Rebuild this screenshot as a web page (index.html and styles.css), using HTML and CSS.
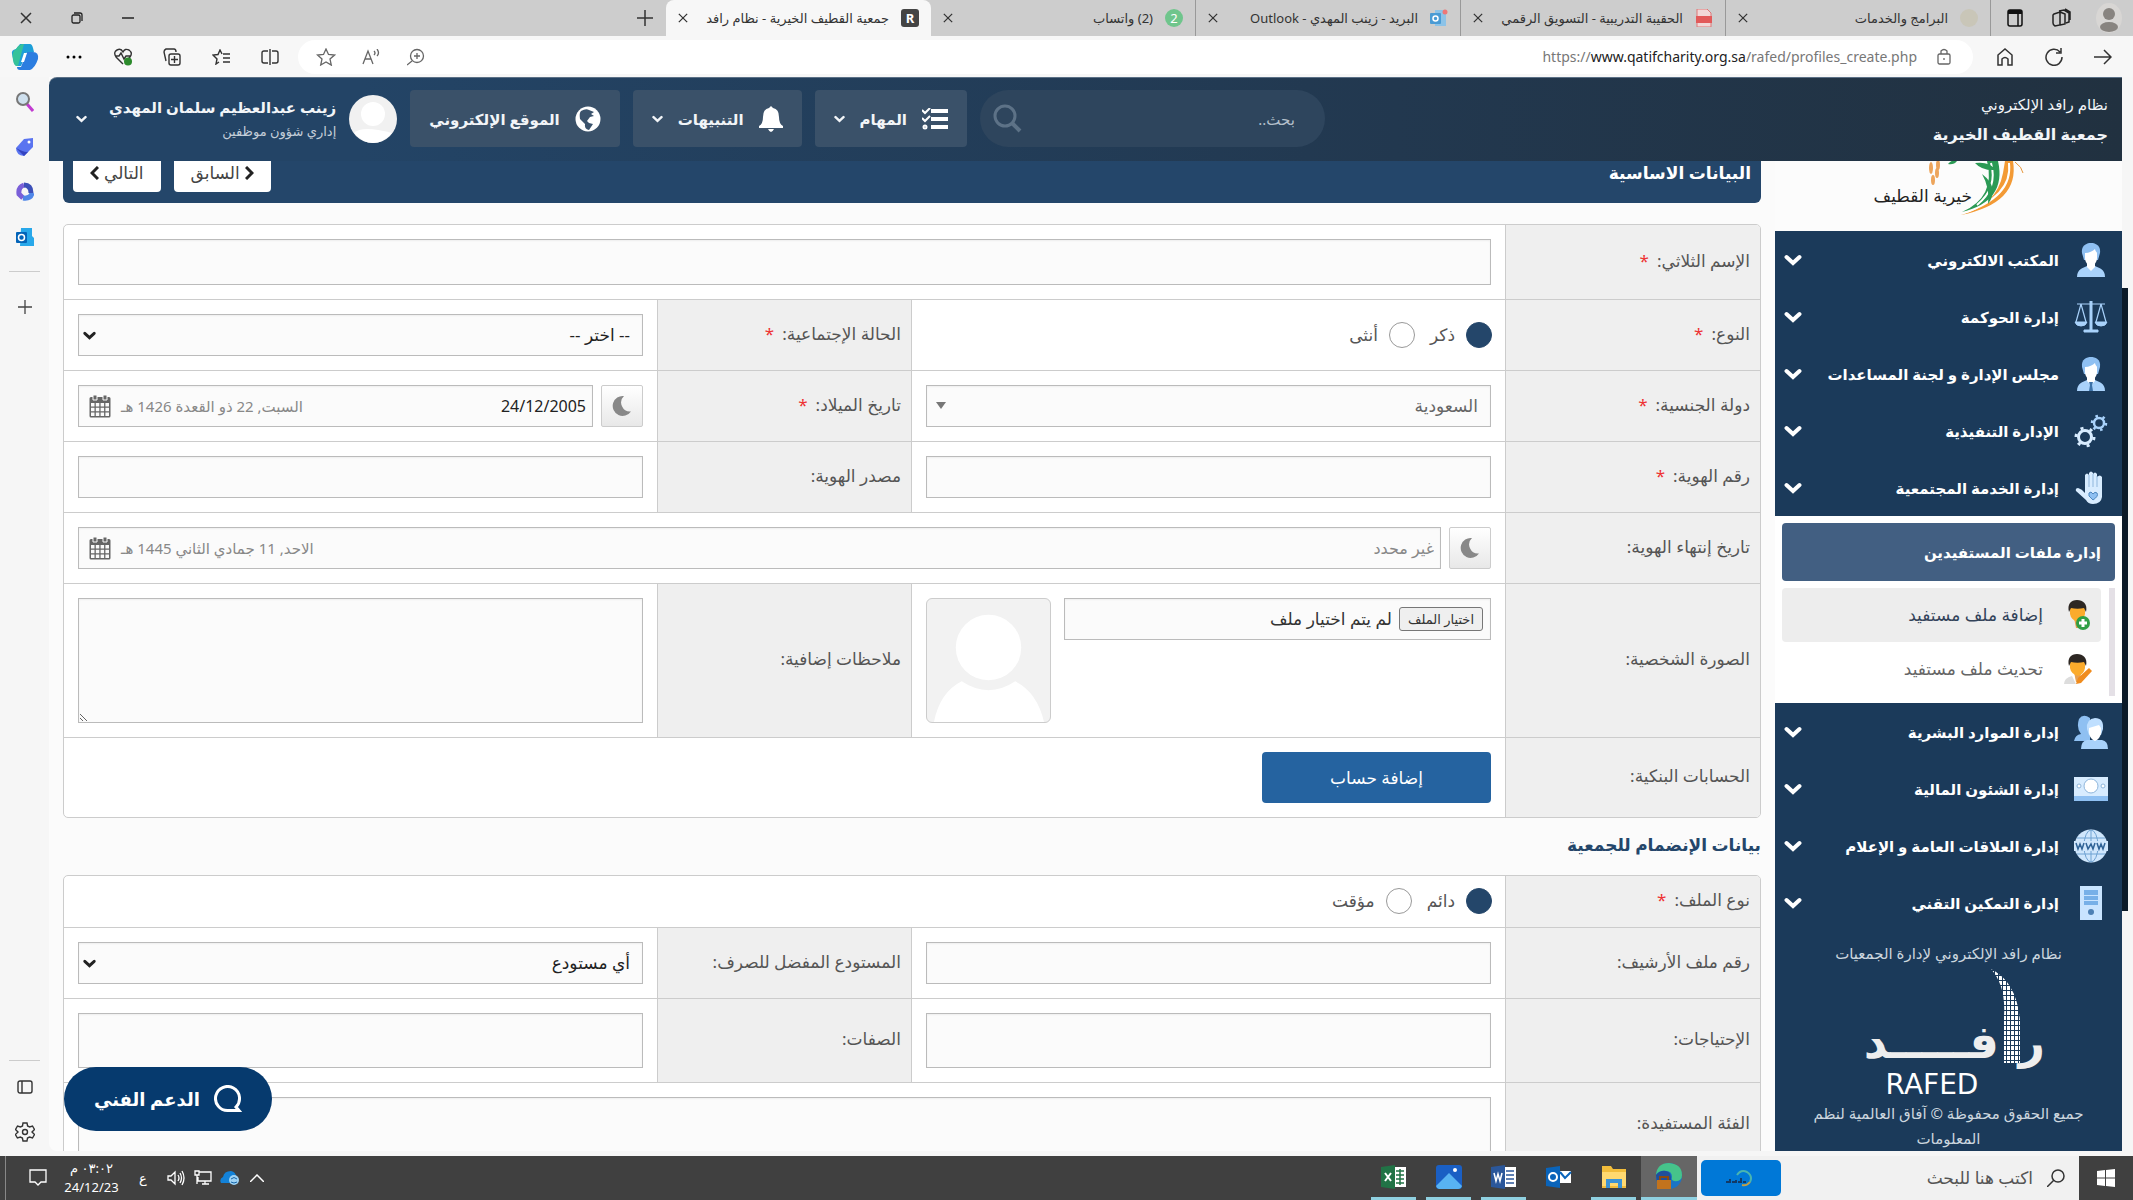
FILE: index.html
```html
<!DOCTYPE html>
<html lang="ar" dir="rtl">
<head>
    <meta charset="UTF-8">
    <meta name="viewport" content="width=device-width, initial-scale=1.0">
    <title>جمعية القطيف الخيرية - نظام رافد</title>
    <link rel="stylesheet" href="styles.css">
</head>
<body>
    <!-- Iconos compartidos -->
    <svg class="sprite" aria-hidden="true">
        <symbol id="close" viewBox="0 0 12 12"><path d="M1 1l10 10M11 1L1 11" fill="none" stroke="currentColor" stroke-width="1.5"/></symbol>
        <symbol id="chevron" viewBox="0 0 18 12"><path d="M2.5 3l6.5 6 6.5-6" fill="none" stroke="currentColor" stroke-width="4" stroke-linecap="round"/></symbol>
        <symbol id="moon" viewBox="0 0 20 22"><path d="M12 1A10 10 0 1 0 19 16.500A9 9 0 0 1 12 1z" fill="currentColor"/></symbol>
        <symbol id="calendar" viewBox="0 0 22 24">
            <path d="M2 3h18a1.500 1.500 0 0 1 1.500 1.500V22a1.500 1.500 0 0 1-1.500 1.500H2A1.500 1.500 0 0 1 .5 22V4.500A1.500 1.500 0 0 1 2 3z" fill="currentColor"/>
            <path d="M4 1h4v5H4zM14 1h4v5h-4z" fill="currentColor" stroke="#fafafa"/>
            <path d="M2 9h3.500v3.500H2zM6.800 9h3.500v3.500H6.800zM11.600 9h3.500v3.500h-3.500zM16.400 9H20v3.500h-3.600zM2 13.700h3.500v3.500H2zM6.800 13.700h3.500v3.500H6.800zM11.600 13.700h3.500v3.500h-3.500zM16.400 13.700H20v3.500h-3.600zM2 18.400h3.500V22H2zM6.800 18.400h3.500V22H6.800zM11.600 18.400h3.500V22h-3.500zM16.400 18.400H20V22h-3.600z" fill="#fafafa"/>
        </symbol>
        <symbol id="person" viewBox="0 0 34 34">
            <path d="M3 34c0-8 6-9 10-11h8c4 2 10 3 10 11z" fill="#a9d2fb"/>
            <path d="M13 20h8v4l-4 4-4-4z" fill="#fff"/>
            <path d="M8 10C7 2 13 0 17 0s10 2 9 10l-2 7H10z" fill="#8fc0f2"/>
            <path d="M11 10c4 0 8-2 10-4 0 2 2 3 2 4v5c0 4-3 8-6 8s-6-4-6-8z" fill="#fff"/>
        </symbol>
        <symbol id="face" viewBox="0 0 30 32">
            <path d="M11 19h7l-1 10h-4z" fill="#e8a050"/>
            <path d="M7 8h15v7q-1 6-7 8-7-2-8-8z" fill="#fbab2c"/>
            <path d="M6 13C4 5 8 1 14 1s11 4 9 12l-2-4c-4 1-9 1-13 0z" fill="#2d2723"/>
        </symbol>
    </svg>

    <div class="window">
        <header class="tabbar">
            <div class="tab-tools">
                <button aria-label="الملف الشخصي"><svg width="26" height="32" viewBox="0 0 26 32"><ellipse cx="13" cy="16" rx="13" ry="15" fill="#d8d6d4"/><circle cx="13" cy="12" r="6" fill="#888480"/><ellipse cx="13" cy="25" rx="9" ry="5" fill="#888480"/></svg></button>
                <button aria-label="مساحات العمل"><svg width="20" height="20" viewBox="0 0 20 20" fill="none" stroke="#222" stroke-width="1.500"><path d="M2 6l6-2v13l-5 1q-2-1-2-3V7zM8 4l5 2v10l-5 1M7 3l5-1 5 3v9l-3 1M13 1l5 3v8"/></svg></button>
                <button aria-label="علامات التبويب"><svg width="16" height="18" viewBox="0 0 16 18" fill="none" stroke="#111" stroke-width="1.500"><rect x="1" y="1" width="14" height="16" rx="2"/><path d="M1 3h14" stroke-width="4"/><path d="M11 4v13"/></svg></button>
            </div>
            <div class="tab">
                <span class="favicon fav-programs"></span><span class="tab-title">البرامج والخدمات</span>
                <button class="tab-close" aria-label="إغلاق"><svg width="10" height="10"><use href="#close"/></svg></button>
            </div>
            <div class="tab">
                <svg class="favicon" viewBox="0 0 16 18"><path d="M1 0h10l4 4v14H1z" fill="#f2d8d8" stroke="#d77"/><path d="M0 7h16v7H0z" fill="#e25a5a"/></svg><span class="tab-title">الحقيبة التدريبية - التسويق الرقمي</span>
                <button class="tab-close" aria-label="إغلاق"><svg width="10" height="10"><use href="#close"/></svg></button>
            </div>
            <div class="tab">
                <svg class="favicon" viewBox="0 0 18 18"><path d="M5 1h11v16H5z" fill="#8cc3e8"/><rect y="4" width="11" height="11" rx="1" fill="#4a9bd4"/><circle cx="5.500" cy="9.500" r="2.500" fill="none" stroke="#fff" stroke-width="1.500"/><circle cx="15" cy="3" r="2.500" fill="#e77"/></svg><span class="tab-title">البريد - زينب المهدي - Outlook</span>
                <button class="tab-close" aria-label="إغلاق"><svg width="10" height="10"><use href="#close"/></svg></button>
            </div>
            <div class="tab">
                <span class="favicon fav-whats">2</span><span class="tab-title">(2) واتساب</span>
                <button class="tab-close" aria-label="إغلاق"><svg width="10" height="10"><use href="#close"/></svg></button>
            </div>
            <div class="tab tab-active">
                <span class="favicon fav-rafed">R</span><span class="tab-title">جمعية القطيف الخيرية - نظام رافد</span>
                <button class="tab-close" aria-label="إغلاق"><svg width="10" height="10"><use href="#close"/></svg></button>
            </div>
            <button class="new-tab" aria-label="علامة تبويب جديدة"><svg width="16" height="16" viewBox="0 0 16 16"><path d="M8 0v16M0 8h16" stroke="#333" stroke-width="1.500"/></svg></button>
            <div class="win-controls">
                <button aria-label="تصغير"><svg width="12" height="12"><path d="M0 6h12" stroke="#222" stroke-width="1.500"/></svg></button>
                <button aria-label="استعادة"><svg width="12" height="12" viewBox="0 0 12 12" fill="none" stroke="#222" stroke-width="1.300"><rect x="1" y="3" width="8" height="8" rx="1.500"/><path d="M3 1h6q2 0 2 2v6"/></svg></button>
                <button aria-label="إغلاق"><svg width="12" height="12"><use href="#close"/></svg></button>
            </div>
        </header>

        <div class="toolbar">
            <button class="tool" aria-label="رجوع"><svg width="18" height="16" viewBox="0 0 18 16" fill="none" stroke="#333" stroke-width="1.500"><path d="M0 8h17M10 1l7 7-7 7"/></svg></button>
            <button class="tool" aria-label="تحديث"><svg width="18" height="18" viewBox="0 0 18 18" fill="none" stroke="#333" stroke-width="1.500"><path d="M15 4a8 8 0 1 0 2 5M16 0v5h-5"/></svg></button>
            <button class="tool" aria-label="الصفحة الرئيسية"><svg width="16" height="18" viewBox="0 0 16 18" fill="none" stroke="#333" stroke-width="1.500"><path d="M1 7l7-6 7 6v10h-4v-6q-3-3-6 0v6H1z"/></svg></button>
            <div class="address">
                <svg class="lock" width="14" height="18" viewBox="0 0 14 18" fill="none" stroke="#666" stroke-width="1.300"><rect x="1" y="6" width="12" height="10" rx="1.500"/><path d="M4 6V3q3-3 6 0v3M7 10v2"/></svg>
                <a class="url" href="#" dir="ltr">https://<b>www.qatifcharity.org.sa</b>/rafed/profiles_create.php</a>
                <button aria-label="تكبير"><svg width="18" height="18" viewBox="0 0 18 18" fill="none" stroke="#666" stroke-width="1.300"><circle cx="10" cy="8" r="6.500"/><path d="M5 13l-5 4M10 5v6M7 8h6"/></svg></button>
                <button aria-label="قراءة بصوت عال"><svg width="18" height="16" viewBox="0 0 18 16" fill="none" stroke="#666" stroke-width="1.300"><path d="M1 15L6 2l5 13M3 10h6M12 2q2 2 0 4M15 0q3 4 0 7"/></svg></button>
                <button aria-label="إضافة إلى المفضلة"><svg width="20" height="18" viewBox="0 0 20 18" fill="none" stroke="#666" stroke-width="1.300"><path d="M10 1l2.500 5.500 6 .6-4.500 4 1.300 6L10 14l-5.300 3 1.300-6-4.500-4 6-.6z"/></svg></button>
            </div>
            <button class="tool" aria-label="تقسيم الشاشة"><svg width="18" height="16" viewBox="0 0 18 16" fill="none" stroke="#333" stroke-width="1.400"><path d="M7 2H3Q1 2 1 4v8q0 2 2 2h4M11 2h4q2 0 2 2v8q0 2-2 2h-4M9 0v16"/></svg></button>
            <button class="tool" aria-label="المفضلة"><svg width="18" height="16" viewBox="0 0 18 16" fill="none" stroke="#333" stroke-width="1.400"><path d="M10 5L8 1 6 5.500l-5 .5 4 4-1 5 3-2M11 5h7M11 9h7M11 13h7"/></svg></button>
            <button class="tool" aria-label="المجموعات"><svg width="18" height="18" viewBox="0 0 18 18" fill="none" stroke="#333" stroke-width="1.400"><rect x="6" y="6" width="11" height="11" rx="2"/><path d="M11.500 8v7M8 11.500h7M3 13L1 4q0-2 2-3l8 0q2 0 2 3"/></svg></button>
            <button class="tool" aria-label="أساسيات المتصفح"><svg width="20" height="18" viewBox="0 0 20 18" fill="none" stroke="#333" stroke-width="1.400"><path d="M10 16L3 9Q0 4 4 2q4-2 6 2 2-4 6-2 4 3 1 7l-2 2M2 8h4l2-3 3 6 2-3h4"/><circle cx="15" cy="13.500" r="4" fill="#2c8a2c" stroke="none"/></svg></button>
            <button class="tool" aria-label="المزيد"><svg width="16" height="4"><circle cx="2" cy="2" r="1.500"/><circle cx="8" cy="2" r="1.500"/><circle cx="14" cy="2" r="1.500"/></svg></button>
            <button class="tool" aria-label="مساعد"><svg width="28" height="26" viewBox="0 0 28 26"><path d="M9 0h10q2 0 3 4l1 4h-7L10 22H6q-2 0-3-3L1 10Q0 6 5 5z" fill="#1d9fd8"/><path d="M5 5q3-5 8-5l-6 22H6q-3 0-4-6Q0 8 5 5z" fill="#35c29a"/><path d="M19 26H9q-3 0-3-3h4l6-15h6q6 0 5 7-3 9-8 11z" fill="#2b7de0"/><path d="M13 9h3l-3 9h-3z" fill="#fff"/></svg></button>
        </div>

        <div class="middle">
            <div class="page-scroll"><div class="thumb"></div></div>

            <div class="app">
                <div class="app-header">
                    <div class="brand">
                        <span>نظام رافد الإلكتروني</span>
                        <strong>جمعية القطيف الخيرية</strong>
                    </div>
                    <div class="search">
                        <input type="text" placeholder="بحث.." aria-label="بحث">
                        <svg width="29" height="29" viewBox="0 0 29 29" fill="none" stroke="#5d7287" stroke-width="3"><circle cx="12" cy="12" r="10"/><path d="M19 19l8 8" stroke-width="4"/></svg>
                    </div>
                    <button class="head-btn">
                        <svg width="26" height="22" viewBox="0 0 26 22" fill="none" stroke="#fff" stroke-width="4"><path d="M9 3h17M9 11h17M9 19h17"/><path d="M0 2l3 3 5-5M0 10l3 3 5-5" stroke-width="2"/><circle cx="3" cy="19" r="1" stroke-width="3"/></svg>
                        المهام
                        <svg class="caret" width="11" height="8"><use href="#chevron"/></svg>
                    </button>
                    <button class="head-btn">
                        <svg width="24" height="26" viewBox="0 0 24 26" fill="#fff"><path d="M12 0l2 2q6 1 6 9 0 7 4 9v2H0v-2q4-2 4-9 0-8 6-9zM9 23h6q-3 6-6 0z"/></svg>
                        التنبيهات
                        <svg class="caret" width="11" height="8"><use href="#chevron"/></svg>
                    </button>
                    <button class="head-btn">
                        <svg width="26" height="26" viewBox="0 0 26 26"><circle cx="13" cy="13" r="12.500" fill="#fff"/><path d="M6 5q5-3 8-1l5 2-3 2 3 2-4 1-3 4 2 2 4 1-4 6q-5-1-4-6l-5-5q-1-6 1-8z" fill="#3b536c"/></svg>
                        الموقع الإلكتروني
                    </button>
                    <svg class="avatar" width="48" height="48" viewBox="0 0 48 48"><circle cx="24" cy="24" r="24" fill="#f1f1f1"/><circle cx="24" cy="19" r="12" fill="#fff"/><path d="M5 38q8-8 38 0-9 10-19 10T5 38z" fill="#fff"/></svg>
                    <div class="user">
                        <strong>زينب عبدالعظيم سلمان المهدي</strong>
                        <span>إداري شؤون موظفين</span>
                    </div>
                    <svg class="caret" width="11" height="8"><use href="#chevron"/></svg>
                </div>

                <div class="app-body">
                    <aside class="sidebar">
                        <div class="org-logo">
                            <svg width="347" height="70" viewBox="0 0 347 70" fill="none">
                                <path d="M238 0Q245 42 186 54Q222 44 228 12L230 0z" fill="#f39a35"/>
                                <path d="M234 2q4 34-46 50" stroke="#fff" stroke-width="2"/>
                                <path d="M240 1q7 5 8 11" stroke="#e8973a"/>
                                <path d="M212 0h11Q232 40 187 51Q221 36 212 0z" fill="#2b9a55"/>
                                <path d="M216 2q7 25-14 42" stroke="#fff" stroke-width="2"/>
                                <path d="M207 13q18 14 6 30 2-16-6-30z" fill="#2b9a55"/>
                                <path d="M200 2q14-2 21 7-14 1-21-7zM173 3q4-5 9-3-3 4-9 3z" fill="#2b9a55"/>
                                <g fill="#eda55c"><ellipse cx="156" cy="7" rx="2" ry="6"/><ellipse cx="163" cy="4" rx="2" ry="5"/><ellipse cx="162" cy="12" rx="2" ry="5"/><ellipse cx="158" cy="19" rx="2" ry="5"/></g>
                                <text x="197" y="41" class="org-name">خيرية القطيف</text>
                            </svg>
                        </div>
                        <nav class="menu">
                            <a href="#"><svg class="menu-icon"><use href="#person"/></svg><span>المكتب الالكتروني</span><svg class="arrow"><use href="#chevron"/></svg></a>
                            <a href="#"><svg class="menu-icon" viewBox="0 0 34 34" fill="none" stroke="#a9d2fb"><path d="M17 1v30" stroke-width="3"/><path d="M3 4h28M7 4L2 22M7 4l5 18M27 4l-5 18M27 4l5 18" stroke-width="1.200"/><path d="M1 22h12q-1 4-6 4t-6-4zM21 22h12q-1 4-6 4t-6-4zM10 30h14v2H10z" fill="#a9d2fb"/></svg><span>إدارة الحوكمة</span><svg class="arrow"><use href="#chevron"/></svg></a>
                            <a href="#"><svg class="menu-icon" viewBox="0 0 34 34"><use href="#person"/><path d="M15 25h4l-1 3 1 6h-4l1-6z" fill="#3d72a8"/></svg><span>مجلس الإدارة و لجنة المساعدات</span><svg class="arrow"><use href="#chevron"/></svg></a>
                            <a href="#"><svg class="menu-icon" viewBox="0 0 34 34" fill="none" stroke="#a9d2fb"><circle cx="11" cy="23" r="6.500" stroke="#d8ecff" stroke-width="3"/><circle cx="11" cy="23" r="9" stroke="#d8ecff" stroke-width="3" stroke-dasharray="3 6.400"/><circle cx="25" cy="9" r="5" stroke-width="2.500"/><circle cx="25" cy="9" r="7" stroke-width="2.500" stroke-dasharray="2.500 4.800"/></svg><span>الإدارة التنفيذية</span><svg class="arrow"><use href="#chevron"/></svg></a>
                            <a href="#"><svg class="menu-icon" viewBox="0 0 34 34"><path d="M11 4q2-3 4 0V2q2-3 4 0v1q2-3 4 0v3q3-3 5 0v20q-1 7-9 7-5 0-7-4L2 20q-1-3 2-3 4 1 7 5z" fill="#d8ecff"/><path d="M15 4v12M19 3v13M23 5v11" stroke="#8fb6dc"/><path d="M19 29l-4-4q-1-4 2-4l2 2q2-3 4-1 2 3-4 7z" fill="#8fc0f2" stroke="#4d88c0"/></svg><span>إدارة الخدمة المجتمعية</span><svg class="arrow"><use href="#chevron"/></svg></a>
                        </nav>
                        <div class="submenu">
                            <h3>إدارة ملفات المستفيدين</h3>
                            <div class="sub-list">
                                <a href="#" class="sub-active"><svg width="30" height="32" viewBox="0 0 30 32"><use href="#face"/><circle cx="20" cy="24" r="7" fill="#2f9e44"/><path d="M20 20v8M16 24h8" stroke="#fff" stroke-width="3"/></svg>إضافة ملف مستفيد</a>
                                <a href="#"><svg width="30" height="32" viewBox="0 0 30 32"><path d="M1 31q0-6 8-8l4 8z" fill="#ddd"/><use href="#face"/><path d="M13 31l2-6L26 15l3 3-11 12z" fill="#f08c1e"/></svg>تحديث ملف مستفيد</a>
                            </div>
                        </div>
                        <nav class="menu">
                            <a href="#"><svg class="menu-icon" viewBox="0 0 34 34"><path d="M0 26q1-6 7-7-5-6-2-15Q9-2 16 3v23z" fill="#8fc0f2"/><path d="M7 34q0-8 6-9h15q6 1 6 9z" fill="#a9d2fb"/><path d="M13 14q-1-10 8-11 9 0 8 11l-2 6H15z" fill="#bfdfff"/><path d="M15 13l10-3 2 3v5q-1 6-6 8-5-2-6-8z" fill="#fff"/></svg><span>إدارة الموارد البشرية</span><svg class="arrow"><use href="#chevron"/></svg></a>
                            <a href="#"><svg class="menu-icon" viewBox="0 0 34 34"><path d="M0 5h34v24H0z" fill="#8fc0f2"/><path d="M0 5h34v19H0z" fill="#d8ecff"/><g fill="#fff" stroke="#8fb6dc"><circle cx="17" cy="14" r="7"/><circle cx="5" cy="14" r="2"/><circle cx="29" cy="14" r="2"/></g></svg><span>إدارة الشئون المالية</span><svg class="arrow"><use href="#chevron"/></svg></a>
                            <a href="#"><svg class="menu-icon" viewBox="0 0 34 34"><circle cx="17" cy="17" r="16.500" fill="#cfe6fc"/><g fill="none" stroke="#6fa2d2"><ellipse cx="17" cy="17" rx="7" ry="16"/><path d="M17 1v32M3 9h28M3 25h28"/></g><path d="M0 12h34v10H0z" fill="#cfe6fc"/><path d="M2 14l2 6 2-5 2 5 2-6M12 14l2 6 3-5 2 5 2-6M23 14l2 6 2-5 2 5 2-6" fill="none" stroke="#2f6296" stroke-width="1.500"/></svg><span>إدارة العلاقات العامة و الإعلام</span><svg class="arrow"><use href="#chevron"/></svg></a>
                            <a href="#"><svg class="menu-icon" viewBox="0 0 34 34"><path d="M6 0h22v34H6z" fill="#c9e4ff"/><path d="M10 4h14v5H10zM10 10h14v4H10zM10 15h14v4H10z" fill="#77b0e8"/><circle cx="17" cy="26" r="3" fill="#4d80b4"/></svg><span>إدارة التمكين التقني</span><svg class="arrow"><use href="#chevron"/></svg></a>
                        </nav>
                        <div class="sidebar-foot">
                            <p>نظام رافد الإلكتروني لإدارة الجمعيات</p>
                            <svg width="220" height="135" viewBox="0 0 220 135">
                                <defs><pattern id="cells" width="4" height="5" patternUnits="userSpaceOnUse"><rect width="3" height="4" fill="#fff"/></pattern></defs>
                                <path d="M165 97V50Q167 20 152 3Q178 16 181 55V97z" fill="url(#cells)"/>
                                <text x="206" y="92" class="rafed-ar">ر</text>
                                <text x="160" y="92" class="rafed-ar">فـــــد</text>
                                <text x="93" y="128" class="rafed-en">RAFED</text>
                            </svg>
                            <p>جميع الحقوق محفوظة © آفاق العالمية لنظم المعلومات</p>
                        </div>
                    </aside>

                    <main class="content">
                        <div class="title-bar">
                            <h1>البيانات الاساسية</h1>
                            <button class="nav-btn"><svg width="9" height="14" viewBox="0 0 9 14"><path d="M1 1l6 6-6 6" fill="none" stroke="#222" stroke-width="3"/></svg>السابق</button>
                            <button class="nav-btn">التالي<svg width="9" height="14" viewBox="0 0 9 14"><path d="M8 1L2 7l6 6" fill="none" stroke="#222" stroke-width="3"/></svg></button>
                        </div>

                        <form class="grid-form">
                            <div class="row">
                                <label class="label" for="fullName">الإسم الثلاثي: <em>*</em></label>
                                <div class="field wide"><input type="text" id="fullName" class="control name-control"></div>
                            </div>
                            <div class="row">
                                <div class="label" id="genderLabel">النوع: <em>*</em></div>
                                <div class="field radios" role="radiogroup" aria-labelledby="genderLabel">
                                    <label><input type="radio" name="gender" checked>ذكر</label>
                                    <label><input type="radio" name="gender">أنثى</label>
                                </div>
                                <label class="label" for="marital">الحالة الإجتماعية: <em>*</em></label>
                                <div class="field select"><select id="marital" class="control"><option>-- اختر --</option></select><svg class="select-arrow" width="13" height="9"><use href="#chevron"/></svg></div>
                            </div>
                            <div class="row">
                                <label class="label" for="country">دولة الجنسية: <em>*</em></label>
                                <div class="field select"><select id="country" class="control muted"><option>السعودية</option></select><svg class="select-arrow triangle" width="10" height="7"><path d="M0 0h10L5 7z" fill="#777"/></svg></div>
                                <label class="label" for="birth">تاريخ الميلاد: <em>*</em></label>
                                <div class="field date">
                                    <button type="button" class="moon" aria-label="هجري"><svg width="20" height="22"><use href="#moon"/></svg></button>
                                    <div class="control date-box"><input type="text" id="birth" value="24/12/2005"><span>السبت, 22 ذو القعدة 1426 هـ</span><svg width="22" height="24"><use href="#calendar"/></svg></div>
                                </div>
                            </div>
                            <div class="row">
                                <label class="label" for="idNumber">رقم الهوية: <em>*</em></label>
                                <div class="field"><input type="text" id="idNumber" class="control"></div>
                                <label class="label" for="idSource">مصدر الهوية:</label>
                                <div class="field"><input type="text" id="idSource" class="control"></div>
                            </div>
                            <div class="row">
                                <label class="label" for="idExpiry">تاريخ إنتهاء الهوية:</label>
                                <div class="field date wide">
                                    <button type="button" class="moon" aria-label="هجري"><svg width="20" height="22"><use href="#moon"/></svg></button>
                                    <div class="control date-box"><input type="text" id="idExpiry" placeholder="غير محدد"><span>الاحد, 11 جمادي الثاني 1445 هـ</span><svg width="22" height="24"><use href="#calendar"/></svg></div>
                                </div>
                            </div>
                            <div class="row">
                                <div class="label">الصورة الشخصية:</div>
                                <div class="field photo">
                                    <div class="control file-box">
                                        <input type="file" id="photo" class="file-input">
                                        <label for="photo" class="file-btn">اختيار الملف</label>
                                        <span>لم يتم اختيار ملف</span>
                                    </div>
                                    <svg class="photo-preview" viewBox="0 0 124 124"><circle cx="62" cy="49" r="33" fill="#fff"/><path d="M7 124q6-30 28-41 27 18 54 0 22 11 29 41z" fill="#fff"/></svg>
                                </div>
                                <label class="label" for="notes">ملاحظات إضافية:</label>
                                <div class="field"><textarea id="notes" class="control notes"></textarea></div>
                            </div>
                            <div class="row">
                                <div class="label">الحسابات البنكية:</div>
                                <div class="field wide"><button type="button" class="add-btn">إضافة حساب</button></div>
                            </div>
                        </form>

                        <h2>بيانات الإنضمام للجمعية</h2>

                        <form class="grid-form">
                            <div class="row">
                                <div class="label" id="fileLabel">نوع الملف: <em>*</em></div>
                                <div class="field radios wide" role="radiogroup" aria-labelledby="fileLabel">
                                    <label><input type="radio" name="fileType" checked>دائم</label>
                                    <label><input type="radio" name="fileType">مؤقت</label>
                                </div>
                            </div>
                            <div class="row">
                                <label class="label" for="archive">رقم ملف الأرشيف:</label>
                                <div class="field"><input type="text" id="archive" class="control"></div>
                                <label class="label" for="store">المستودع المفضل للصرف:</label>
                                <div class="field select"><select id="store" class="control"><option>أي مستودع</option></select><svg class="select-arrow" width="13" height="9"><use href="#chevron"/></svg></div>
                            </div>
                            <div class="row">
                                <label class="label" for="needs">الإحتياجات:</label>
                                <div class="field"><input type="text" id="needs" class="control tags-control"></div>
                                <label class="label" for="traits">الصفات:</label>
                                <div class="field"><input type="text" id="traits" class="control tags-control"></div>
                            </div>
                            <div class="row">
                                <label class="label" for="group">الفئة المستفيدة:</label>
                                <div class="field wide"><input type="text" id="group" class="control tags-control"></div>
                            </div>
                        </form>
                    </main>
                </div>

                <button class="support">
                    <svg width="28" height="28" viewBox="0 0 28 28" fill="none" stroke="#fff" stroke-width="3"><path d="M22 22a12 12 0 1 0-8 3.500h11z"/></svg>
                    الدعم الفني
                </button>
            </div>

            <div class="edge-bar">
                <button aria-label="بحث"><svg width="18" height="20" viewBox="0 0 18 20"><path d="M11 12l6 7" stroke="#c13bd0" stroke-width="3"/><circle cx="7" cy="7" r="6" fill="#cfe0ee" stroke="#777" stroke-width="2"/></svg></button>
                <button aria-label="تسوق"><svg width="18" height="20" viewBox="0 0 18 20"><path d="M8 2l9-1v9l-9 9q-8-1-8-8z" fill="#5a74f0"/><path d="M0 11l8 8 5-5q-2 3-13-3z" fill="#3443c0"/><circle cx="13" cy="5" r="1.500" fill="#fff"/></svg></button>
                <button aria-label="مايكروسوفت 365"><svg width="18" height="20" viewBox="0 0 18 20" fill="none" stroke-width="5"><path d="M8 3q-6 2-5 9l4 4" stroke="#7a5fd8"/><path d="M7 16q8 1 9-5" stroke="#4f86e8"/><path d="M8 3q7 0 7 8" stroke="#3c4fb8"/></svg></button>
                <button aria-label="Outlook"><svg width="18" height="18" viewBox="0 0 18 18"><path d="M5 0h11v8l2 2v8H4z" fill="#28a8ea"/><rect y="4" width="11" height="11" rx="1" fill="#0364b8"/><circle cx="5.500" cy="9.500" r="3" fill="none" stroke="#fff" stroke-width="1.500"/></svg></button>
                <hr>
                <button aria-label="تخصيص"><svg width="14" height="14" viewBox="0 0 14 14"><path d="M7 0v14M0 7h14" stroke="#444" stroke-width="1.300"/></svg></button>
                <hr class="edge-bottom">
                <button aria-label="إخفاء الشريط"><svg width="16" height="14" viewBox="0 0 16 14" fill="none" stroke="#333" stroke-width="1.400"><rect x="1" y="1" width="14" height="12" rx="2"/><path d="M5 1v12"/></svg></button>
                <button aria-label="الإعدادات"><svg width="20" height="20" viewBox="0 0 20 20" fill="none" stroke="#333" stroke-width="1.400"><path d="M8 1h4l.6 3 2 1L17.500 4l2 3.500L17 10l2.500 2.500-2 3.500-3-1-2 1-.5 3H8l-.6-3-2-1-3 1-2-3.500L3 10 .5 7.500l2-3.500 3 1 2-1z"/><circle cx="10" cy="10" r="2.500"/></svg></button>
            </div>
        </div>

        <footer class="taskbar">
            <button class="start" aria-label="ابدأ"><svg width="18" height="18" viewBox="0 0 18 18" fill="#fff"><path d="M0 2l8-1v7.500H0zM9 1l9-1v8.500H9zM0 9.500h8V17l-8-1zM9 9.500h9V18l-9-1z"/></svg></button>
            <div class="task-search">
                <svg width="18" height="18" viewBox="0 0 18 18" fill="none" stroke="#333" stroke-width="1.500"><circle cx="11" cy="7" r="6"/><path d="M7 11l-7 7"/></svg>
                <input type="text" placeholder="اكتب هنا للبحث" aria-label="اكتب هنا للبحث">
                <button class="highlight" aria-label="أبرز الأحداث"><svg width="30" height="20" viewBox="0 0 30 20" fill="none"><path d="M11 7q4-6 10-3 6 4 3 10" stroke="#4ab5b0" stroke-width="2"/><path d="M24 14q-3 4-8 3" stroke="#c0a04a" stroke-width="2"/><path d="M0 14h4v-3M6 14h4v-2M12 14h3v-4M17 14h3" stroke="#123a66" stroke-width="2"/></svg></button>
            </div>
            <div class="task-apps">
                <button class="running current" aria-label="Edge"><svg width="28" height="28" viewBox="0 0 28 28"><circle cx="14" cy="13" r="13" fill="#1b74c5"/><path d="M1 12Q2 0 14 0q13 1 13 12 0 7-8 6-3-1-2-4 0-6-6-6Q5 7 1 12z" fill="#46c38a"/><path d="M1 12q4-5 10-4 5 1 5 7v11H9Q1 22 1 12z" fill="#1f4f9c"/><path d="M2 17h14v9H2z" fill="#c2731d"/><path d="M5 17v-3h8v3" fill="none" stroke="#8a4a10" stroke-width="2"/></svg></button>
                <button class="running" aria-label="مستكشف الملفات"><svg width="24" height="22" viewBox="0 0 24 22"><path d="M0 0h9l2 3h13v19H0z" fill="#f2bd3b"/><path d="M0 6h24v14H0z" fill="#ffd970"/><path d="M4 22v-9h16v9h-4v-5H8v5z" fill="#3b93d6"/></svg></button>
                <button aria-label="Outlook"><svg width="26" height="22" viewBox="0 0 26 22"><path d="M0 2l14-2v22L0 20z" fill="#0a64ba"/><path d="M14 5h11v12H14z" fill="#fff"/><path d="M14 6l5 6 6-6" fill="none" stroke="#0a64ba" stroke-width="2"/><circle cx="7" cy="11" r="4" fill="none" stroke="#fff" stroke-width="2"/></svg></button>
                <button class="running" aria-label="Word"><svg width="26" height="24" viewBox="0 0 26 24"><path d="M13 2h12v20H13z" fill="#fff"/><path d="M15 6h8M15 10h8M15 14h8M15 18h8" stroke="#2b579a" stroke-width="1.500"/><path d="M0 2l14-2v24L0 22z" fill="#2b579a"/><path d="M3 8l2 8 2-7 2 7 2-8" fill="none" stroke="#fff" stroke-width="1.500"/></svg></button>
                <button class="running" aria-label="الصور"><svg width="26" height="24" viewBox="0 0 26 24"><rect width="26" height="24" rx="3" fill="#1a5fc4"/><path d="M0 21L13 8l13 13q-1 3-4 3H3q-2 0-3-3z" fill="#58b3f2"/><circle cx="19" cy="5" r="2" fill="#fff"/></svg></button>
                <button class="running" aria-label="Excel"><svg width="26" height="24" viewBox="0 0 26 24"><path d="M13 2h12v20H13z" fill="#fff"/><path d="M15 6h8M15 10h8M15 14h8M15 18h8M19 4v16" stroke="#217346" stroke-width="1.500"/><path d="M0 2l14-2v24L0 22z" fill="#217346"/><path d="M4 8l6 8M10 8l-6 8" stroke="#fff" stroke-width="2"/></svg></button>
            </div>
            <div class="tray">
                <button aria-label="إظهار الرموز المخفية"><svg width="14" height="8" viewBox="0 0 14 8"><path d="M0 8l7-7 7 7" fill="none" stroke="#fff" stroke-width="1.500"/></svg></button>
                <button aria-label="OneDrive"><svg width="20" height="14" viewBox="0 0 20 14"><path d="M1 12q-2-4 2-6 1-6 8-6 5 1 5 6l-2 6z" fill="#1382d8"/><circle cx="14" cy="9" r="5" fill="#9ed3f5"/><path d="M11 8q3-3 6 0M17 11q-3 2-6 0" stroke="#1464a8" fill="none"/></svg></button>
                <button aria-label="الشبكة"><svg width="18" height="16" viewBox="0 0 18 16" fill="none" stroke="#fff" stroke-width="1.300"><path d="M5 2h12v9H4V7M8 14h7M11 11v3M1 1h4v4H1zM3 5v9"/></svg></button>
                <button aria-label="الصوت"><svg width="18" height="16" viewBox="0 0 18 16" fill="none" stroke="#fff" stroke-width="1.300"><path d="M1 6h3l4-4v12l-4-4H1zM11 5q2 3 0 6M13 3q3 5 0 10M15 1q4 7 0 14"/></svg></button>
                <span class="lang">ع</span>
                <div class="clock"><span>٠٣:٠٢ م</span><span>24/12/23</span></div>
                <button aria-label="الإشعارات"><svg width="18" height="18" viewBox="0 0 18 18" fill="none" stroke="#fff" stroke-width="1.300"><path d="M1 1h16v12h-5l-3 3-3-3H1z"/></svg></button>
            </div>
        </footer>
    </div>
</body>
</html>
```

FILE: styles.css
```css
* {
    box-sizing: border-box;
}
body {
    margin: 0;
    font-family: "Noto Sans", "DejaVu Sans", sans-serif;
    font-size: 15px;
    line-height: 22px;
    color: #555;
    background: #f6f6f6;
}
button, input, select, textarea {
    font: inherit;
    color: inherit;
}
button {
    display: flex;
    align-items: center;
    justify-content: center;
    padding: 0;
    border: 0;
    background: none;
    white-space: nowrap;
}
a {
    color: inherit;
    text-decoration: none;
}
svg {
    flex: none;
}
.sprite {
    position: absolute;
    width: 0;
    height: 0;
}
.window {
    display: flex;
    flex-direction: column;
    height: 100vh;
    overflow: hidden;
}

/* pestañas del navegador */
.tabbar {
    display: flex;
    flex: none;
    height: 36px;
    background: #cdcdcd;
    color: #333;
    font-size: 13px;
}
.tab-tools {
    display: flex;
    width: 142px;
}
.tab-tools button {
    flex: 1;
}
.tab {
    display: flex;
    align-items: center;
    gap: 12px;
    width: 265px;
    padding: 0 12px;
    border-right: 1px solid #999;
}
.tab-active {
    background: #f7f7f7;
    border: 0;
    border-radius: 8px 8px 0 0;
}
.tab-active + .new-tab {
    width: 42px;
}
.tab-title {
    flex: 1;
    overflow: hidden;
    white-space: nowrap;
}
.favicon {
    width: 18px;
    height: 18px;
    text-align: center;
    line-height: 18px;
}
.fav-programs {
    border-radius: 50%;
    background: #c9c6b8;
}
.fav-whats {
    border-radius: 50%;
    background: #6fc58c;
    color: #fff;
}
.fav-rafed {
    border-radius: 3px;
    background: #444;
    color: #fff;
    font-weight: bold;
}
.win-controls {
    display: flex;
    margin-right: auto;
}
.win-controls button {
    width: 51px;
}

/* barra de direcciones */
.toolbar {
    display: flex;
    flex: none;
    align-items: center;
    height: 41px;
    padding-right: 6px;
    background: #f7f7f7;
}
.tool {
    width: 49px;
    height: 40px;
}
.address {
    display: flex;
    flex: 1;
    align-items: center;
    height: 34px;
    margin: 0 7px 0 4px;
    padding: 0 22px 0 5px;
    border-radius: 17px;
    background: #fff;
}
.address button {
    width: 45px;
}
.url {
    flex: 1;
    margin-right: 20px;
    text-align: right;
    font-size: 14px;
    color: #777;
}
.url b {
    font-weight: normal;
    color: #222;
}

.middle {
    display: flex;
    flex: 1;
    min-height: 0;
}
.page-scroll {
    width: 11px;
    padding: 211px 5px 0 0;
}
.thumb {
    height: 623px;
    background: #0b1a28;
}
.app {
    position: relative;
    display: flex;
    flex: 1;
    flex-direction: column;
    min-width: 0;
    margin-bottom: 5px;
    overflow: hidden;
    border-radius: 0 0 0 8px;
    background: #fbfbfb;
}
.edge-bar {
    display: flex;
    flex-direction: column;
    align-items: center;
    width: 49px;
    padding: 2px 0;
}
.edge-bar button {
    width: 44px;
    height: 45px;
}
.edge-bar hr {
    width: 31px;
    margin: 12px 0;
    border: 0;
    border-top: 1px solid #ccc;
}
.edge-bar .edge-bottom {
    margin: auto 0 3px;
}

/* cabecera de la aplicacion */
.app-header {
    z-index: 1;
    display: flex;
    flex: none;
    align-items: center;
    gap: 13px;
    height: 84px;
    padding: 0 14px 2px 27px;
    border-top: 1px solid #5b7086;
    border-radius: 8px 0 0 0;
    background: linear-gradient(to left, #213140, #22384f 35%, #234466 85%);
    color: #f2f5f8;
}
.brand {
    display: flex;
    flex-direction: column;
    gap: 8px;
    margin-left: auto;
}
.brand strong {
    font-size: 16px;
}
.search {
    display: flex;
    align-items: center;
    width: 345px;
    height: 57px;
    padding: 0 28px 0 13px;
    border-radius: 29px;
    background: #2e455d;
}
.search input {
    flex: 1;
    min-width: 0;
    border: 0;
    background: none;
}
.search input::placeholder {
    color: #b5c0cb;
    opacity: 1;
}
.head-btn {
    gap: 15px;
    height: 57px;
    padding: 0 19px;
    border-radius: 4px;
    background: #3a5169;
    font-weight: bold;
}
.user {
    display: flex;
    flex-direction: column;
    gap: 2px;
    margin-left: 9px;
}
.user span {
    font-size: 13px;
    color: #c3ced9;
}

.app-body {
    display: flex;
    flex: 1;
    align-items: flex-start;
    min-height: 0;
}
.sidebar {
    flex: none;
    width: 347px;
    background: #1b3a5a;
    color: #fff;
}
.org-logo {
    height: 70px;
    background: #fcfcfc;
}
.org-name {
    font-size: 17px;
    fill: #222;
}
.menu a {
    display: flex;
    align-items: center;
    gap: 15px;
    height: 57px;
    padding: 0 14px 0 9px;
    font-weight: bold;
}
.menu span {
    flex: 1;
    white-space: nowrap;
}
.menu-icon {
    width: 34px;
    height: 34px;
}
.arrow {
    width: 18px;
    height: 12px;
}
.submenu {
    padding: 7px;
    background: #fff;
}
.submenu h3 {
    margin: 0 0 7px;
    padding: 18px 14px;
    border-radius: 4px;
    background: #425f82;
    font-size: 15px;
}
.sub-list {
    padding-right: 8px;
    border-right: 6px solid #e4e0e6;
}
.sub-list a {
    display: flex;
    align-items: center;
    gap: 20px;
    height: 54px;
    padding: 0 8px;
    border-radius: 4px;
    color: #666;
    font-size: 17px;
}
.sub-list .sub-active {
    background: #ededed;
    color: #33435a;
}
.sidebar-foot {
    padding: 10px 14px 0;
    text-align: center;
    color: #ccd6df;
    line-height: 25px;
}
.sidebar-foot p {
    margin: 0;
    padding: 0 20px;
}
.sidebar-foot svg {
    display: block;
    margin: 0 auto;
}
.rafed-ar {
    font-family: "DejaVu Sans", sans-serif;
    font-size: 46px;
    font-weight: bold;
    fill: #eee;
}
.rafed-en {
    direction: ltr;
    text-anchor: middle;
    font-family: "DejaVu Sans", sans-serif;
    font-size: 28px;
    fill: #fff;
}

/* formulario */
.content {
    flex: 1;
    min-width: 0;
    padding: 0 14px;
}
.title-bar {
    display: flex;
    gap: 13px;
    align-items: center;
    height: 60px;
    margin: -18px 0 21px;
    padding: 0 10px;
    border-radius: 6px;
    background: #24466a;
}
.title-bar h1 {
    flex: 1;
    margin: 0;
    font-size: 17px;
    color: #fff;
}
.nav-btn {
    gap: 5px;
    height: 38px;
    padding: 0 17px;
    border-radius: 4px;
    background: #fff;
    color: #444;
    font-size: 17px;
}
.grid-form {
    overflow: hidden;
    border: 1px solid #ccc;
    border-radius: 5px;
    background: #fff;
    font-size: 17px;
}
.row {
    display: grid;
    grid-template-columns: 255px 1fr 255px 1fr;
    border-bottom: 1px solid #ccc;
}
.row:last-child {
    border-bottom: 0;
}
.label {
    display: flex;
    align-items: center;
    gap: 8px;
    padding: 0 10px 3px;
    border-left: 1px solid #ccc;
    background: #efefef;
}
.field + .label {
    border-right: 1px solid #ccc;
}
.label em {
    color: #e33;
    font-style: normal;
}
.field {
    padding: 14px;
}
.wide {
    grid-column: span 3;
}
.control {
    display: block;
    width: 100%;
    height: 42px;
    padding: 0 12px;
    border: 1px solid #bbb;
    border-radius: 0;
    background: #fbfbfb;
    box-shadow: inset 0 1px 2px #eee;
}
.name-control {
    height: 46px;
}
.tags-control {
    height: 55px;
}
.select {
    position: relative;
}
.select select {
    appearance: none;
    color: #222;
}
.select .muted {
    color: #666;
}
.select-arrow {
    position: absolute;
    top: 31px;
    left: 19px;
    color: #222;
}
.triangle {
    left: 24px;
}
.radios {
    display: flex;
    align-items: center;
    gap: 15px;
    padding: 12px 13px 13px;
}
.radios label {
    display: flex;
    align-items: center;
    gap: 11px;
}
.radios input {
    appearance: none;
    width: 26px;
    height: 26px;
    margin: 0;
    border: 1px solid #999;
    border-radius: 50%;
    background: #fff;
}
.radios input:checked {
    border-color: #24466a;
    background: #24466a;
}
.date {
    display: flex;
    gap: 8px;
}
.moon {
    width: 42px;
    height: 42px;
    border: 1px solid #ccc;
    border-radius: 2px;
    background: linear-gradient(#fff, #e8e8e8);
    color: #888;
}
.date-box {
    display: flex;
    flex: 1;
    align-items: center;
    gap: 10px;
    padding: 0 6px 0 10px;
    font-size: 15px;
    color: #888;
}
.date-box svg {
    color: #666;
}
.date-box input {
    flex: 1;
    min-width: 0;
    padding: 0;
    border: 0;
    background: none;
    font-size: 16px;
    color: #222;
}
.date-box input::placeholder {
    color: #888;
    opacity: 1;
}
.photo {
    display: flex;
    align-items: flex-start;
    gap: 13px;
}
.file-box {
    display: flex;
    flex: 1;
    align-items: center;
    gap: 7px;
    padding: 0 7px;
    color: #333;
}
.file-input {
    position: absolute;
    width: 1px;
    height: 1px;
    opacity: 0;
}
.file-btn {
    padding: 0 8px;
    border: 1px solid #777;
    border-radius: 3px;
    background: #efefef;
    font-size: 13px;
}
.photo-preview {
    width: 125px;
    height: 125px;
    border: 1px solid #ccc;
    border-radius: 6px;
    background: #f2f2f2;
}
.notes {
    height: 125px;
    resize: vertical;
}
.add-btn {
    width: 229px;
    height: 51px;
    border-radius: 4px;
    background: #2563a0;
    color: #fff;
}
.content h2 {
    margin: 0;
    padding: 16px 0 19px;
    font-size: 17px;
    color: #24466a;
}
.support {
    position: absolute;
    bottom: 20px;
    left: 15px;
    gap: 14px;
    height: 64px;
    padding: 0 30px;
    border-radius: 32px;
    background: #063a6e;
    color: #fff;
    font-size: 18px;
    font-weight: bold;
}

/* barra de tareas */
.taskbar {
    display: flex;
    flex: none;
    height: 44px;
    background: #404040;
    color: #fff;
}
.start {
    width: 54px;
}
.task-search {
    display: flex;
    align-items: center;
    gap: 14px;
    width: 382px;
    padding: 0 14px 0 4px;
    background: #f1f1f1;
    font-size: 17px;
}
.task-search input {
    flex: 1;
    min-width: 0;
    padding: 0;
    border: 0;
    background: none;
}
.task-search input::placeholder {
    color: #555;
    opacity: 1;
}
.highlight {
    width: 80px;
    height: 36px;
    border-radius: 5px;
    background: #0078d7;
}
.task-apps {
    display: flex;
    gap: 10px;
}
.task-apps button {
    width: 45px;
    border-bottom: 3px solid transparent;
}
.task-apps .running {
    border-color: #8fd0e0;
}
.task-apps .current {
    width: 56px;
    margin-left: -5px;
    background: #666;
}
.tray {
    display: flex;
    align-items: center;
    margin-right: auto;
    margin-left: 5px;
    padding-left: 18px;
    border-left: 1px solid #888;
    font-size: 13px;
}
.tray button {
    width: 27px;
    height: 40px;
}
.lang {
    width: 38px;
    text-align: center;
}
.clock {
    display: flex;
    flex-direction: column;
    width: 65px;
    margin-left: 8px;
    text-align: center;
    line-height: 19px;
}
```
